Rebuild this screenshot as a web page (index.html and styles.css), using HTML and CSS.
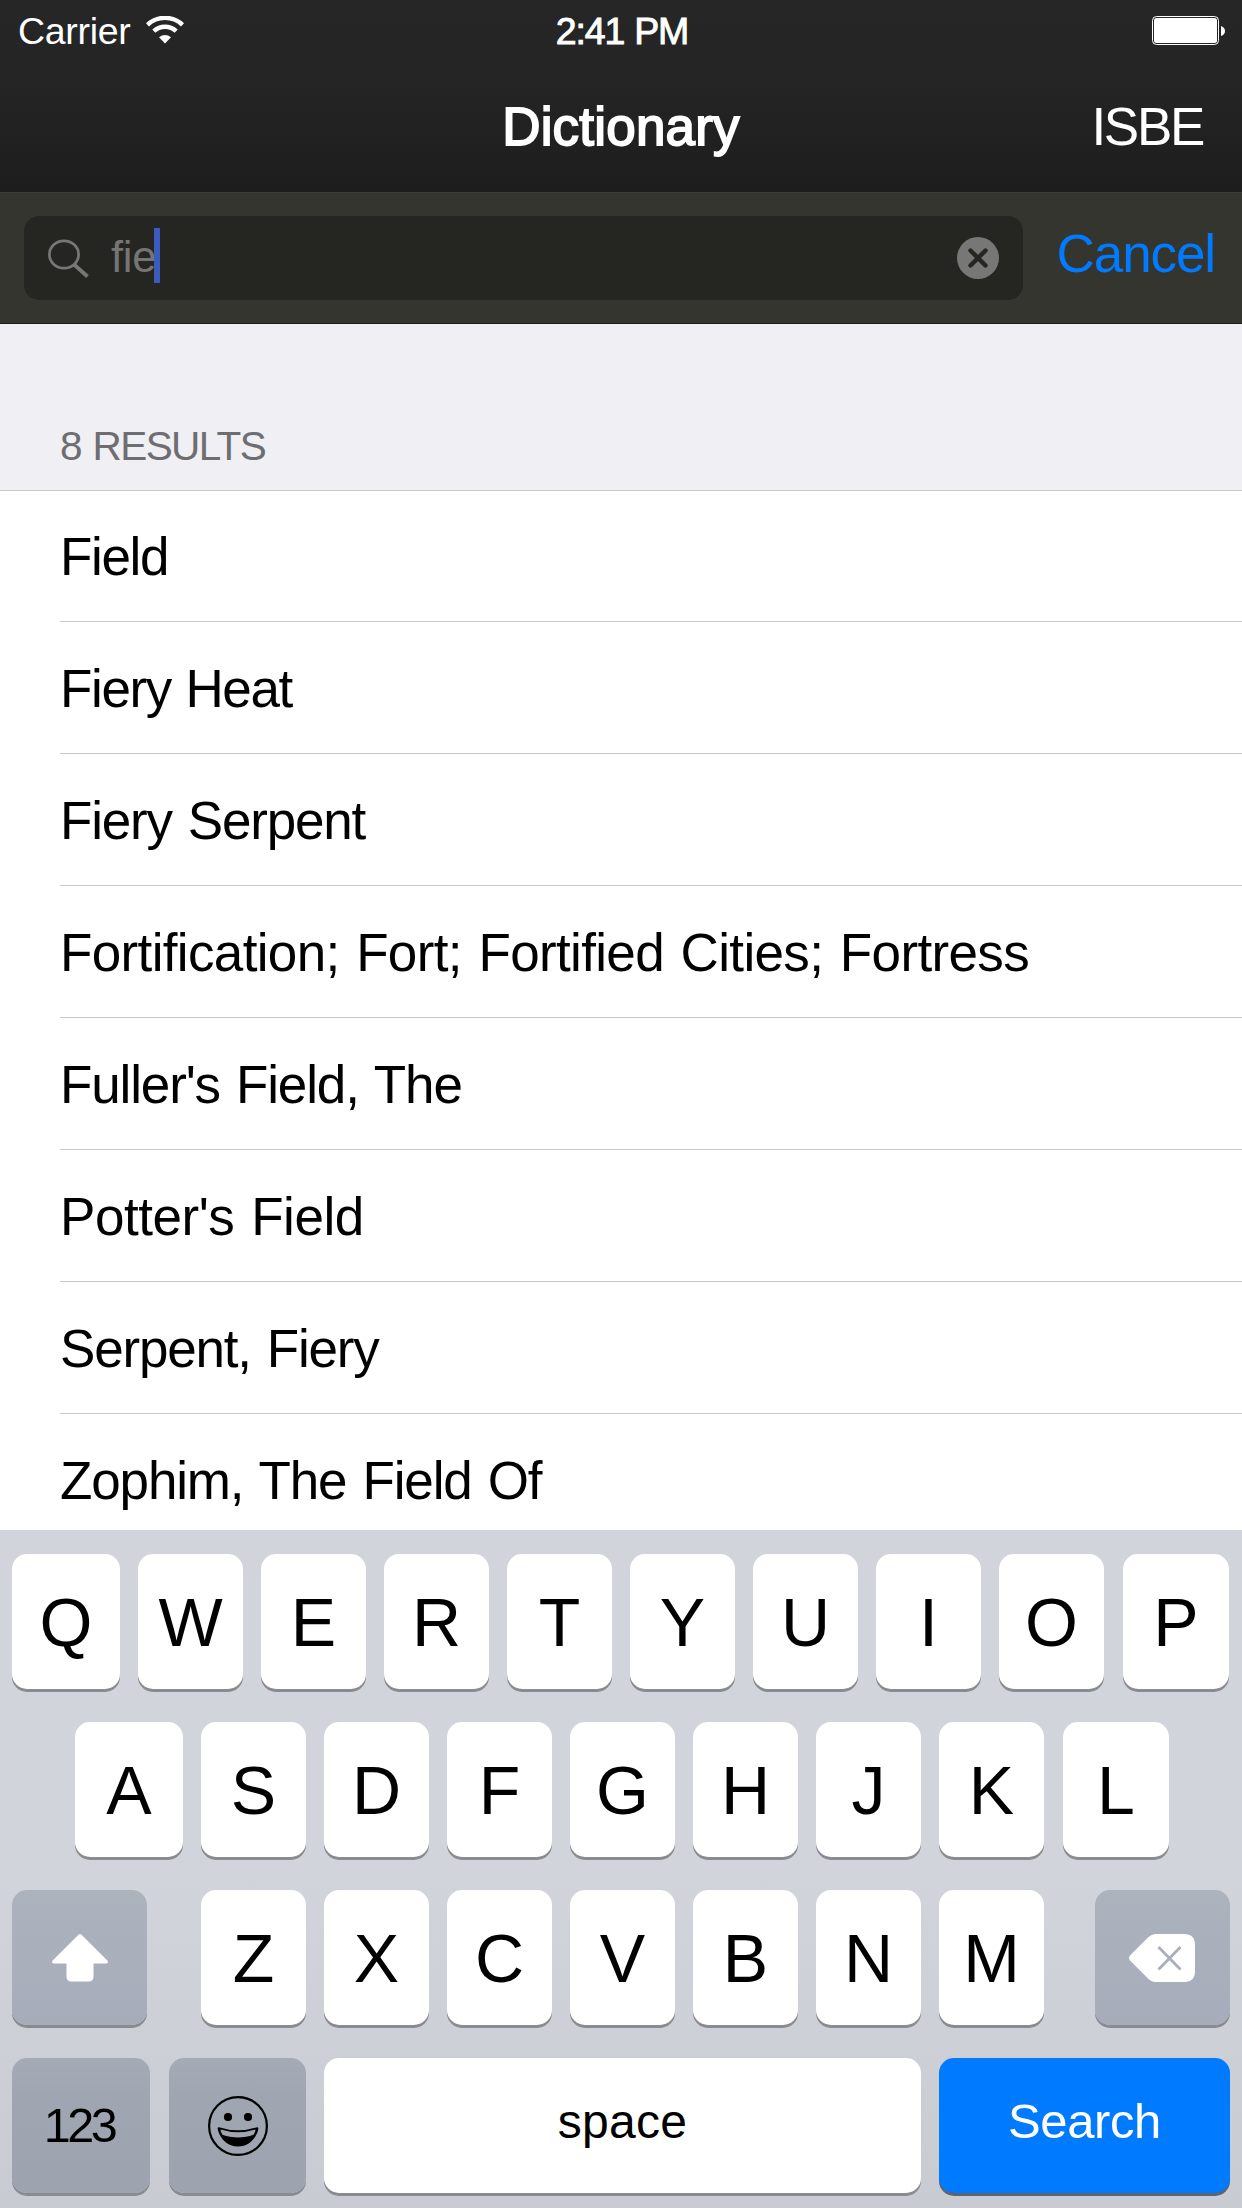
FILE: index.html
```html
<!DOCTYPE html>
<html lang="en">
<head>
<meta charset="utf-8">
<title>Dictionary</title>
<link rel="stylesheet" href="styles.css">
</head>
<body>
<header class="top">
  <div class="status">
    <div class="carrier"><span>Carrier</span>
      <svg class="wifi" width="38" height="28" viewBox="0 0 38 28"><g fill="none" stroke="#fff"><path d="M1.500 8.800A25.500 25.500 0 0 1 36.500 8.800" stroke-width="4.400"/><path d="M7.800 15.200A16.500 16.500 0 0 1 30.200 15.200" stroke-width="4.400"/></g><path d="M13 21.200Q19 16.600 25 21.200L19 27.500Z" fill="#fff"/></svg>
    </div>
    <div class="time">2:41 PM</div>
    <svg class="battery" width="74" height="30" viewBox="0 0 74 30"><rect x=".5" y=".5" width="66" height="28" rx="4" fill="none" stroke="#fff"/><rect x="2" y="2" width="63" height="25" rx="2.500" fill="#fff"/><path d="M69 10Q73 11.500 73 15T69 20Z" fill="#fff"/></svg>
  </div>
  <div class="nav"><span></span><h1>Dictionary</h1><a class="source">ISBE</a></div>
</header>
<div class="searchbar">
  <div class="field">
    <svg class="glass" width="42" height="40" viewBox="0 0 42 40" fill="none" stroke="#777775"><ellipse cx="16" cy="15.500" rx="14.600" ry="13.700" stroke-width="2.700"/><path d="M26 25.500L39.500 37.500" stroke-width="3.800"/></svg>
    <span class="query">fie</span><span class="caret"></span>
    <svg class="clear" width="42" height="42" viewBox="0 0 42 42"><circle cx="21" cy="21" r="21" fill="#777"/><path d="M13.500 13.500L28.500 28.500M28.500 13.500L13.500 28.500" stroke="#252621" stroke-width="4.400" stroke-linecap="round"/></svg>
  </div>
  <a class="cancel">Cancel</a>
</div>
<main class="results">
  <h2>8 RESULTS</h2>
  <ul>
    <li class="tight"><span>Field</span></li>
    <li class="tight"><span>Fiery Heat</span></li>
    <li class="snug"><span>Fiery Serpent</span></li>
    <li class="loose"><span>Fortification; Fort; Fortified Cities; Fortress</span></li>
    <li><span>Fuller's Field, The</span></li>
    <li class="wide"><span>Potter's Field</span></li>
    <li class="snug"><span>Serpent, Fiery</span></li>
    <li><span>Zophim, The Field Of</span></li>
  </ul>
</main>
<section class="keyboard">
  <div class="keys first"><b>Q</b><b>W</b><b>E</b><b>R</b><b>T</b><b>Y</b><b>U</b><b>I</b><b>O</b><b>P</b></div>
  <div class="keys second"><b>A</b><b>S</b><b>D</b><b>F</b><b>G</b><b>H</b><b>J</b><b>K</b><b>L</b></div>
  <div class="keys third">
    <b class="dark upper shift"><svg width="56" height="48" viewBox="0 0 56 48"><path d="M26.500 .8Q28 -.6 29.500 .8L55.400 26.500Q57 29.500 54 29.500H41.500V42.500Q41.500 47.500 36.500 47.500H19.500Q14.500 47.500 14.500 42.500V29.500H2Q-1 29.500 .6 26.500Z" fill="#fff"/></svg></b>
    <b>Z</b><b>X</b><b>C</b><b>V</b><b>B</b><b>N</b><b>M</b>
    <b class="dark upper delete"><svg width="66" height="48" viewBox="0 0 66 48"><path d="M1 21.500L19 3.600Q22.500 0 27.500 0H55Q66 0 66 11V37Q66 48 55 48H27.500Q22.500 48 19 44.400L1 26.500Q-1 24 1 21.500Z" fill="#fff"/><path d="M29.500 13L51.500 35.500M51.500 13L29.500 35.500" stroke="#a9afbb" stroke-width="2.800"/></svg></b>
  </div>
  <div class="keys fourth">
    <b class="dark lower numbers">123</b>
    <b class="dark lower emoji"><svg width="60" height="60" viewBox="0 0 60 60"><circle cx="30" cy="30" r="28.900" fill="none" stroke="#000" stroke-width="2.200"/><circle cx="20" cy="21" r="4.100"/><circle cx="40" cy="21" r="4.100"/><path d="M11 31.200Q30 37.500 49 31.200Q51 31 50 34.500C47 44 40 50.500 30 50.500S13 44 10 34.500Q9 31 11 31.200Z"/><path d="M12.500 33.600Q30 39 47.500 33.600Q47.500 36 45.500 38.800C36 42.500 24 42.500 14.500 38.800Q12.500 36 12.500 33.600Z" fill="#9fa5b0"/></svg></b>
    <b class="space">space</b>
    <b class="go">Search</b>
  </div>
</section>
</body>
</html>
```
FILE: styles.css
```css
* { box-sizing: border-box; margin: 0; padding: 0; }
body { width: 1242px; height: 2208px; overflow: hidden; background: #fff; color: #000; font-family: "Liberation Sans", Arial, sans-serif; display: flex; flex-direction: column; }
svg { display: block; flex: none; }

.top { height: 193px; color: #fff; background: linear-gradient(#262626, #252525 40%, #1d1d1d); border-bottom: 1px solid #3b3b3b; }
.status { height: 62px; display: grid; grid-template-columns: 1fr auto 1fr; align-items: center; padding: 0 16px 0 18px; font-size: 37.5px; }
.carrier { display: flex; align-items: center; }
.carrier span { width: 128px; white-space: nowrap; letter-spacing: -0.3px; }
.wifi { margin-top: -3px; }
.time { letter-spacing: -1.2px; word-spacing: 1px; -webkit-text-stroke: 0.9px #fff; }
.battery { justify-self: end; }
.nav { height: 129px; display: grid; grid-template-columns: 1fr auto 1fr; align-items: center; padding: 0 39px; font-size: 53px; }
.nav h1 { font-size: 53px; font-weight: 400; letter-spacing: 0.2px; -webkit-text-stroke: 1.8px #fff; }
.source { justify-self: end; letter-spacing: -2.3px; }

.searchbar { height: 131px; flex: none; display: flex; align-items: center; padding: 0 27px 2px 24px; background: #353530; border-bottom: 1px solid #1e1e1e; justify-content: space-between; }
.field { width: 999px; height: 84px; margin-top: 1px; border-radius: 15px; background: #252621; display: flex; align-items: center; padding: 0 24px; }
.glass { margin: 2px 20px 0 0; }
.query { font-size: 43.5px; color: #757575; padding-left: 1px; width: 44px; white-space: nowrap; letter-spacing: -0.3px; }
.caret { width: 6px; height: 55px; background: #3a5bbf; margin-top: -4px; }
.clear { margin-left: auto; }
.cancel { color: #007aff; font-size: 53px; letter-spacing: -1.1px; margin-top: -7px; }

.results { height: 1206px; overflow: hidden; flex: none; }
.results h2 { height: 166px; background: #efeff4; color: #6d6d72; font-weight: 400; font-size: 40.5px; letter-spacing: -1.6px; word-spacing: 2px; line-height: 48px; padding: 98px 0 0 60px; }
.results ul { list-style: none; border-top: 1px solid #c8c7cc; }
.results li { height: 132px; padding-left: 60px; letter-spacing: -1.15px; word-spacing: 2.5px; }
.results li:first-child { height: 131px; }
.results li span { display: flex; align-items: center; height: 100%; padding-top: 2px; border-bottom: 1px solid #c8c7cc; font-size: 53px; white-space: nowrap; }
.results li:first-child span { padding-top: 0; }
.results .tight { letter-spacing: -1.35px; word-spacing: 1px; }
.results .snug { letter-spacing: -1.2px; }
.results .loose { letter-spacing: -0.65px; }
.results .wide { letter-spacing: -0.45px; }

.keyboard { flex: 1; background: linear-gradient(#d1d4db 50%, #c8cbd2); padding-top: 24px; display: flex; flex-direction: column; gap: 33px; }
.keys { height: 135px; display: flex; gap: 18px; flex: none; }
.keys b { width: 105px; flex: none; border-radius: 15px; background: #fff; box-shadow: 0 3px 0 #898b8f; font-weight: 400; font-size: 68px; display: flex; align-items: center; justify-content: center; }
.first { padding-left: 12px; }
.second { padding-left: 75px; }
.third, .fourth { padding-left: 12px; }
.keys.first b:first-child, .keys.second b:first-child { width: 108px; }
.keys.first b:last-child, .keys.second b:last-child { width: 106px; margin-left: 1px; }
.keys .upper { width: 135px; background: linear-gradient(#adb3bd, #a6acb9); }
.keys .shift { margin-right: 36px; }
.keys .delete { margin-left: 33px; padding-right: 1px; }
.keys .lower { width: 138px; background: linear-gradient(#a5abb6, #9fa5b1 30%, #9da4af); font-size: 48.5px; }
.keys .numbers { letter-spacing: -3.5px; padding: 0 4px 1px 0; }
.keys .emoji { width: 137px; margin-left: 1px; }
.keys .space { width: 597px; font-size: 48px; letter-spacing: 0.3px; padding-bottom: 8px; }
.keys .go { width: 291px; font-size: 49px; letter-spacing: -0.4px; color: #fff; background: #007aff; padding-bottom: 9px; box-shadow: 0 3px 0 #5c6470; }
```
